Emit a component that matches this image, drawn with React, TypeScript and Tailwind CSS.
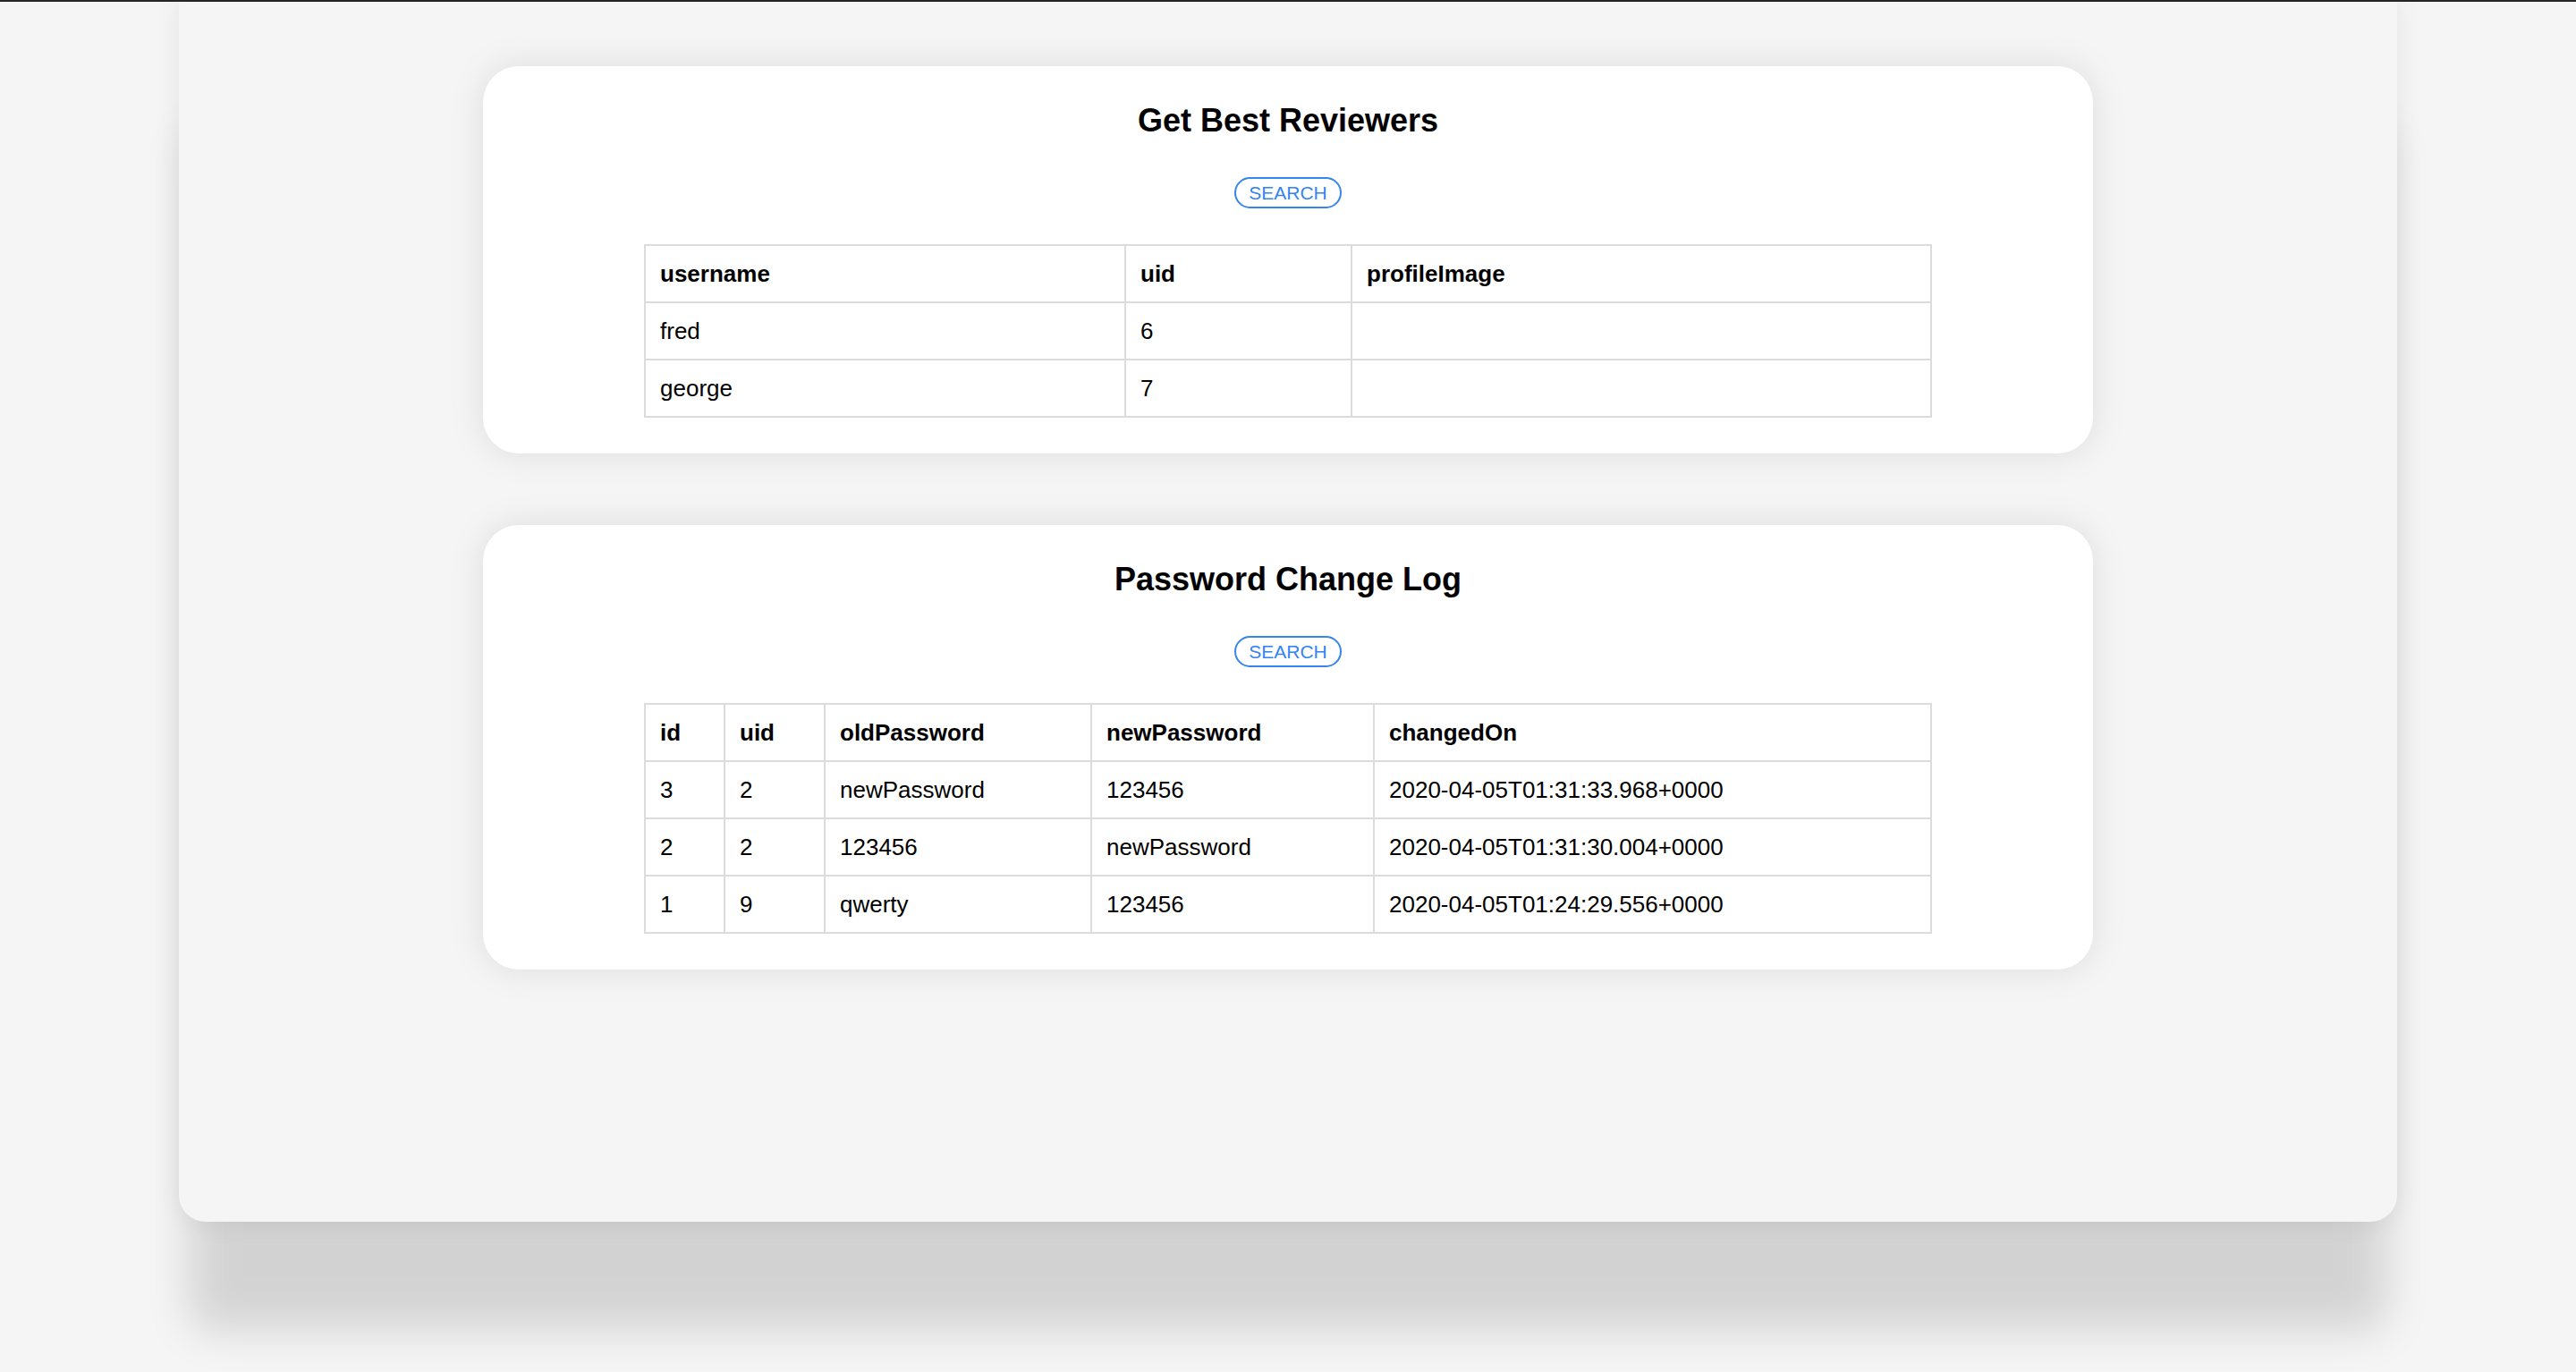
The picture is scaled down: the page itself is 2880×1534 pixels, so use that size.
const reviewers = [
  { username: "fred", uid: "6", profileImage: "" },
  { username: "george", uid: "7", profileImage: "" },
];

const passwordLog = [
  { id: "3", uid: "2", oldPassword: "newPassword", newPassword: "123456", changedOn: "2020-04-05T01:31:33.968+0000" },
  { id: "2", uid: "2", oldPassword: "123456", newPassword: "newPassword", changedOn: "2020-04-05T01:31:30.004+0000" },
  { id: "1", uid: "9", oldPassword: "qwerty", newPassword: "123456", changedOn: "2020-04-05T01:24:29.556+0000" },
];

type Column = { key: string; width: string };

function DataTable({ columns, rows }: { columns: Column[]; rows: Record<string, string>[] }) {
  return (
    <table className="mt-[40px] w-[1438px] table-fixed border-collapse text-[26px] text-black">
      <colgroup>
        {columns.map((c) => (
          <col key={c.key} className={c.width} />
        ))}
      </colgroup>
      <thead>
        <tr>
          {columns.map((c) => (
            <th key={c.key} className="h-[64px] border-2 border-[#dcdcdc] px-[16px] text-left font-bold">
              {c.key}
            </th>
          ))}
        </tr>
      </thead>
      <tbody>
        {rows.map((row, i) => (
          <tr key={i}>
            {columns.map((c) => (
              <td key={c.key} className="h-[64px] border-2 border-[#dcdcdc] px-[16px] font-normal">
                {row[c.key]}
              </td>
            ))}
          </tr>
        ))}
      </tbody>
    </table>
  );
}

function Card({ title, children }: { title: string; children: React.ReactNode }) {
  return (
    <div className="flex w-[1800px] flex-col items-center rounded-[40px] bg-white pt-[40px] pb-[40px] shadow-[0_0_40px_rgba(0,0,0,0.1)]">
      <h1 className="text-[36px] leading-[42px] font-bold text-black">{title}</h1>
      <button className="mt-[42px] flex h-[35px] w-[120px] items-center justify-center rounded-full border-2 border-[#3584f2] text-[21px] leading-none text-[#3584f2]">
        SEARCH
      </button>
      {children}
    </div>
  );
}

export default function App() {
  return (
    <div className="h-screen overflow-hidden bg-[#f5f5f5] font-['Liberation_Sans',Arial,sans-serif]">
      <div className="h-[2px] bg-[#252525]" />
      <div className="ml-[200px] flex h-[1364px] w-[2480px] flex-col items-center gap-[80px] rounded-b-[30px] bg-[#f5f5f5] pt-[72px] shadow-[0_133px_50px_-12px_rgba(0,0,0,0.14),0_0_30px_rgba(0,0,0,0.08)]">
        <Card title="Get Best Reviewers">
          <DataTable
            columns={[
              { key: "username", width: "w-[537px]" },
              { key: "uid", width: "w-[253px]" },
              { key: "profileImage", width: "w-[648px]" },
            ]}
            rows={reviewers}
          />
        </Card>
        <Card title="Password Change Log">
          <DataTable
            columns={[
              { key: "id", width: "w-[89px]" },
              { key: "uid", width: "w-[112px]" },
              { key: "oldPassword", width: "w-[298px]" },
              { key: "newPassword", width: "w-[316px]" },
              { key: "changedOn", width: "w-[623px]" },
            ]}
            rows={passwordLog}
          />
        </Card>
      </div>
    </div>
  );
}
